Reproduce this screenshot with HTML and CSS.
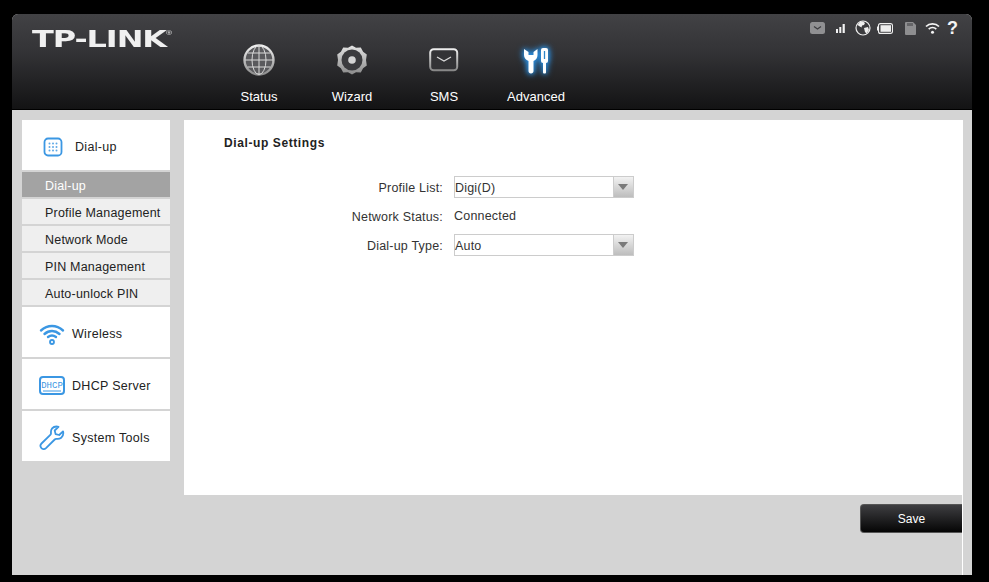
FILE: index.html
```html
<!DOCTYPE html>
<html lang="en">
<head>
<meta charset="utf-8">
<title>TP-LINK</title>
<link rel="stylesheet" href="styles.css">
</head>
<body>
<div class="app">
  <header class="header">
    <div class="logo">TP-LINK<sup class="reg">®</sup></div>
    <nav class="nav">
      <a class="nav-item nav-status">
        <svg class="nav-icon" viewBox="0 0 34 34" width="34" height="34"><defs><linearGradient id="g1" x1="0" y1="0" x2="0" y2="1"><stop offset="0" stop-color="#f0f0f0"/><stop offset="1" stop-color="#8d8d8d"/></linearGradient></defs><circle cx="17" cy="17" r="14.500" fill="#5a5a5d" stroke="url(#g1)" stroke-width="2.400"/><g fill="none" stroke="#d8d8d8" stroke-width="1"><ellipse cx="17" cy="17" rx="7" ry="14.500"/><path d="M17 3v28M3 17h28M5.500 10h23M5.500 24h23"/></g></svg>
        <span>Status</span>
      </a>
      <a class="nav-item nav-wizard">
        <svg class="nav-icon" viewBox="0 0 34 34" width="34" height="34"><defs><linearGradient id="g2" x1="0" y1="0" x2="0" y2="1"><stop offset="0" stop-color="#e4e4e4"/><stop offset="1" stop-color="#8a8a8a"/></linearGradient></defs><path d="M17 2.500l4 2.300 4.800-.3 2.300 4.200 3.700 2.800-.8 5.500.8 5.500-3.700 2.800-2.300 4.200-4.800-.3-4 2.300-4-2.300-4.800.3-2.300-4.200-3.700-2.800.8-5.500-.8-5.500 3.700-2.800 2.300-4.200 4.800.3z" fill="url(#g2)"/><circle cx="17" cy="17" r="10.500" fill="#3b3b3e"/><circle cx="17" cy="17" r="3.800" fill="#d4d4d4"/></svg>
        <span>Wizard</span>
      </a>
      <a class="nav-item nav-sms">
        <svg class="nav-icon" viewBox="0 0 34 34" width="34" height="34"><defs><linearGradient id="g3" x1="0" y1="0" x2="0" y2="1"><stop offset="0" stop-color="#eee"/><stop offset="1" stop-color="#888"/></linearGradient></defs><rect x="3.200" y="6.200" width="27" height="21" rx="3.500" fill="#333336" stroke="url(#g3)" stroke-width="2"/><path d="M10 14l7 4 7-4" fill="none" stroke="#d8d8d8" stroke-width="1.300"/></svg>
        <span>SMS</span>
      </a>
      <a class="nav-item nav-advanced">
        <svg class="nav-icon glow" viewBox="0 0 34 34" width="34" height="34"><path d="M5 6v6c0 3 2 5 4.500 6v10c0 1.500 1 2.500 2.500 2.500s2.500-1 2.500-2.500V18c2.500-1 4-3 4-6V6L14.500 9v3h-5V9z" fill="#fff"/><rect x="22" y="5" width="7" height="15" rx="2" fill="#fff"/><rect x="24" y="18" width="3" height="12.500" rx="1" fill="#fff"/><path d="M25.500 8v8" stroke="#2f86c9" stroke-width="1.300"/></svg>
        <span>Advanced</span>
      </a>
    </nav>
    <div class="status-icons">
      <svg class="si" width="15" height="12" viewBox="0 0 15 12"><rect width="15" height="12" rx="2.500" fill="#909092"/><path d="M4 4.500l3.500 2.500 3.500-2.500" fill="none" stroke="#3d3d40" stroke-width="1.300"/></svg>
      <svg class="si si-sig" width="9" height="9" viewBox="0 0 9 9"><path d="M0 5h2v4H0zM3.300 3h2v6h-2zM6.600 0h2.200v9H6.600z" fill="#f2f2f2"/></svg>
      <svg class="si si-globe" width="16" height="16" viewBox="0 0 16 16"><circle cx="8" cy="8" r="7" fill="#3c3c3f" stroke="#eee" stroke-width="1.200"/><path d="M5 2l3-.5 2 1.500-1 2-2 .5-.5 2-2.500-1.500L2.500 5zM9 8l4-1 1 3-2.500 3.500-1.500-1.500z" fill="#eee"/></svg>
      <svg class="si si-batt" width="16" height="11" viewBox="0 0 16 11"><rect x="1.500" y=".6" width="14" height="9.800" rx="2" fill="#3c3c3f" stroke="#f0f0f0" stroke-width="1.100"/><rect x="3.500" y="2.200" width="10.500" height="6.600" fill="#ededed"/><rect y="3.500" width="1.200" height="4" fill="#f0f0f0"/></svg>
      <svg class="si si-sd" width="11" height="13" viewBox="0 0 11 13"><path d="M0 1a1 1 0 0 1 1-1h7l3 3v9a1 1 0 0 1-1 1H1a1 1 0 0 1-1-1z" fill="#8e8e90"/><path d="M3 1v3M5 1v3M7 1v3" stroke="#3d3d40" stroke-width="1"/></svg>
      <svg class="si si-wifi" width="15" height="12" viewBox="0 0 15 12"><g fill="none" stroke="#f4f4f4" stroke-width="1.700"><path d="M1 4.500c3.500-3.600 9.500-3.600 13 0"/><path d="M3.700 7.200c2.200-2 5.400-2 7.600 0"/></g><circle cx="7.500" cy="10.300" r="1.500" fill="#f4f4f4"/></svg>
      <span class="si-help">?</span>
    </div>
  </header>
  <div class="body">
    <aside class="side">
      <div class="side-head side-head-dial">
        <svg class="side-icon" width="20" height="20" viewBox="0 0 20 20"><rect x="1.500" y="1.500" width="17" height="17" rx="3.500" fill="none" stroke="#3b97e3" stroke-width="1.800"/><g fill="#5fa9e6"><circle cx="6.500" cy="6.500" r="1"/><circle cx="10" cy="6.500" r="1"/><circle cx="13.500" cy="6.500" r="1"/><circle cx="6.500" cy="10" r="1"/><circle cx="10" cy="10" r="1"/><circle cx="13.500" cy="10" r="1"/><circle cx="6.500" cy="13.500" r="1"/><circle cx="10" cy="13.500" r="1"/><circle cx="13.500" cy="13.500" r="1"/></g></svg>
        <span>Dial-up</span>
      </div>
      <a class="sub sub-active">Dial-up</a>
      <a class="sub">Profile Management</a>
      <a class="sub">Network Mode</a>
      <a class="sub">PIN Management</a>
      <a class="sub">Auto-unlock PIN</a>
      <div class="side-head">
        <svg class="side-icon" width="26" height="22" viewBox="0 0 26 22"><g fill="none" stroke="#3b97e3" stroke-width="2.400" stroke-linecap="round"><path d="M2 7.500c6.500-6 15.500-6 22 0"/><path d="M5.500 11c4.500-4 10.500-4 15 0"/><path d="M9 14c2.500-2 5.500-2 8 0"/></g><circle cx="13" cy="19" r="2" fill="none" stroke="#3b97e3" stroke-width="1.800"/></svg>
        <span>Wireless</span>
      </div>
      <div class="side-head">
        <svg class="side-icon" width="26" height="20" viewBox="0 0 26 20"><rect x="1" y="1" width="24" height="17" rx="3" fill="none" stroke="#3b97e3" stroke-width="2"/><text x="13" y="12" text-anchor="middle" class="dhcp-text">DHCP</text><path d="M4 15h18" stroke="#3b97e3" stroke-width="1"/></svg>
        <span>DHCP Server</span>
      </div>
      <div class="side-head">
        <svg class="side-icon" width="26" height="26" viewBox="0 0 26 26"><path d="M17.500 1.500c-3.800 0-6 3-5.500 6.500.1.800-.2 1.300-.7 1.800L2.500 18.500c-1.500 1.500-1 3.500-.2 4.500 1 1.200 3 1.800 4.700.2l8.700-8.700c.5-.5 1-.8 1.800-.7 3.500.6 6.800-1.700 6.800-5.500 0-.8-.1-1.400-.3-2l-3.800 3.700-3.600-.9-.9-3.600L19.500 1.800c-.6-.2-1.200-.3-2-.3z" fill="none" stroke="#3b97e3" stroke-width="1.800" stroke-linejoin="round"/></svg>
        <span>System Tools</span>
      </div>
    </aside>
    <div class="content">
      <main class="panel">
        <h1 class="title">Dial-up Settings</h1>
        <div class="form">
          <label class="lbl">Profile List:</label>
          <div class="select"><span class="select-val">Digi(D)</span><span class="select-btn"></span></div>
          <label class="lbl">Network Status:</label>
          <div class="val">Connected</div>
          <label class="lbl">Dial-up Type:</label>
          <div class="select"><span class="select-val">Auto</span><span class="select-btn"></span></div>
        </div>
      </main>
      <div class="footer">
        <button class="save">Save</button>
      </div>
    </div>
  </div>
</div>
</body>
</html>
```
FILE: styles.css
```css
* { box-sizing: border-box; }
html, body { margin: 0; height: 100%; background: #000; overflow: hidden; }
body { font-family: "Liberation Sans", Arial, sans-serif; font-size: 12px; color: #222; }
.app { margin: 14px 17px 0 12px; width: 960px; height: 561px; display: flex; flex-direction: column; background: #d4d4d4; border-radius: 6px 6px 0 0; overflow: hidden; }
.header { position: relative; height: 96px; flex: none; background: linear-gradient(#424245, #333336 40%, #131314 100%); border-bottom: 1px solid #000; display: flex; }
.logo { position: absolute; left: 20px; top: 12px; font-family: "DejaVu Sans", sans-serif; font-weight: 700; font-size: 23px; line-height: 26px; color: #f0f0f0; white-space: nowrap; transform-origin: left top; transform: scaleX(1.39); letter-spacing: -.8px; }
.reg { font-size: 6px; vertical-align: top; line-height: 14px; font-family: "Liberation Sans", sans-serif; font-weight: 400; }
.nav { position: absolute; left: 0; top: 0; bottom: 0; width: 100%; }
.nav-item { position: absolute; top: 29px; display: flex; flex-direction: column; align-items: center; color: #fff; font-size: 13px; width: 80px; line-height: 16px; }
.nav-icon { display: block; margin-bottom: 12px; flex: none; }
.nav-status { left: 207px; }
.nav-wizard { left: 300px; }
.nav-sms { left: 392px; }
.nav-advanced { left: 484px; }
.glow { filter: drop-shadow(0 0 3px #2a8ee0) drop-shadow(0 0 2px #2a8ee0); }
.status-icons { position: absolute; right: 13px; top: 6px; display: flex; align-items: center; height: 16px; }
.si { display: block; flex: none; }
.si-sig { margin-left: 11px; }
.si-globe { margin-left: 10px; }
.si-batt { margin-left: 6px; }
.si-sd { margin-left: 12px; }
.si-wifi { margin-left: 9px; }
.si-help { margin-left: 6px; width: 13px; font: 700 18px/16px "Liberation Sans", sans-serif; color: #f4f4f4; text-align: center; }
.body { flex: 1; display: flex; padding: 10px 0 0 10px; gap: 14px; min-height: 0; }
.side { width: 148px; flex: none; display: flex; flex-direction: column; gap: 2px; }
.side-head { height: 50px; background: #fff; display: flex; align-items: center; padding: 3px 0 0 17px; gap: 7px; color: #222; font-size: 12.500px; }
.side-head span { letter-spacing: .3px; }
.side-icon { flex: none; }
.side-head-dial { padding-left: 21px; gap: 12px; }
.dhcp-text { font-family: "Liberation Mono", monospace; font-size: 9px; fill: #3b97e3; }
.sub { height: 25px; display: flex; align-items: center; padding: 2px 0 0 23px; background: #efefef; color: #222; font-size: 12.500px; letter-spacing: .2px; }
.sub-active { background: #a3a3a3; color: #fff; }
.content { flex: 1; display: flex; flex-direction: column; min-width: 0; }
.panel { height: 375px; width: 779px; background: #fff; flex: none; padding: 16px 40px; }
.title { margin: 0; font-size: 12px; font-weight: 700; line-height: 15px; color: #222; letter-spacing: .6px; }
.form { display: grid; grid-template-columns: 219px 180px; column-gap: 11px; row-gap: 7px; margin-top: 25px; align-items: center; }
.lbl { text-align: right; font-size: 12.500px; color: #333; letter-spacing: .2px; padding-top: 1px; }
.val { font-size: 12.500px; color: #333; line-height: 21px; letter-spacing: .2px; padding-top: 1px; }
.select { height: 22px; border: 1px solid #ccc; background: #fff; display: flex; align-items: center; justify-content: space-between; }
.select-val { font-size: 12.500px; color: #333; letter-spacing: .2px; padding-top: 1px; }
.select-btn { width: 20px; height: 20px; background: linear-gradient(#f2f2f2, #bdbdbd); border-left: 1px solid #ccc; position: relative; }
.select-btn::after { content: ""; position: absolute; left: 4px; top: 7px; border: 5px solid transparent; border-top: 6px solid #7a7a7a; border-bottom: 0; }
.footer { flex: 1; display: flex; justify-content: flex-end; align-items: flex-start; padding-top: 9px; margin-right: -1px; border-right: 1px solid #fff; width: 779px; }
.save { width: 102px; height: 29px; border: 1px solid #555; border-right: 0; border-radius: 4px 0 0 4px; background: linear-gradient(#3e3e41, #050505); color: #fff; font: 12px "Liberation Sans", sans-serif; padding: 0; }
```
